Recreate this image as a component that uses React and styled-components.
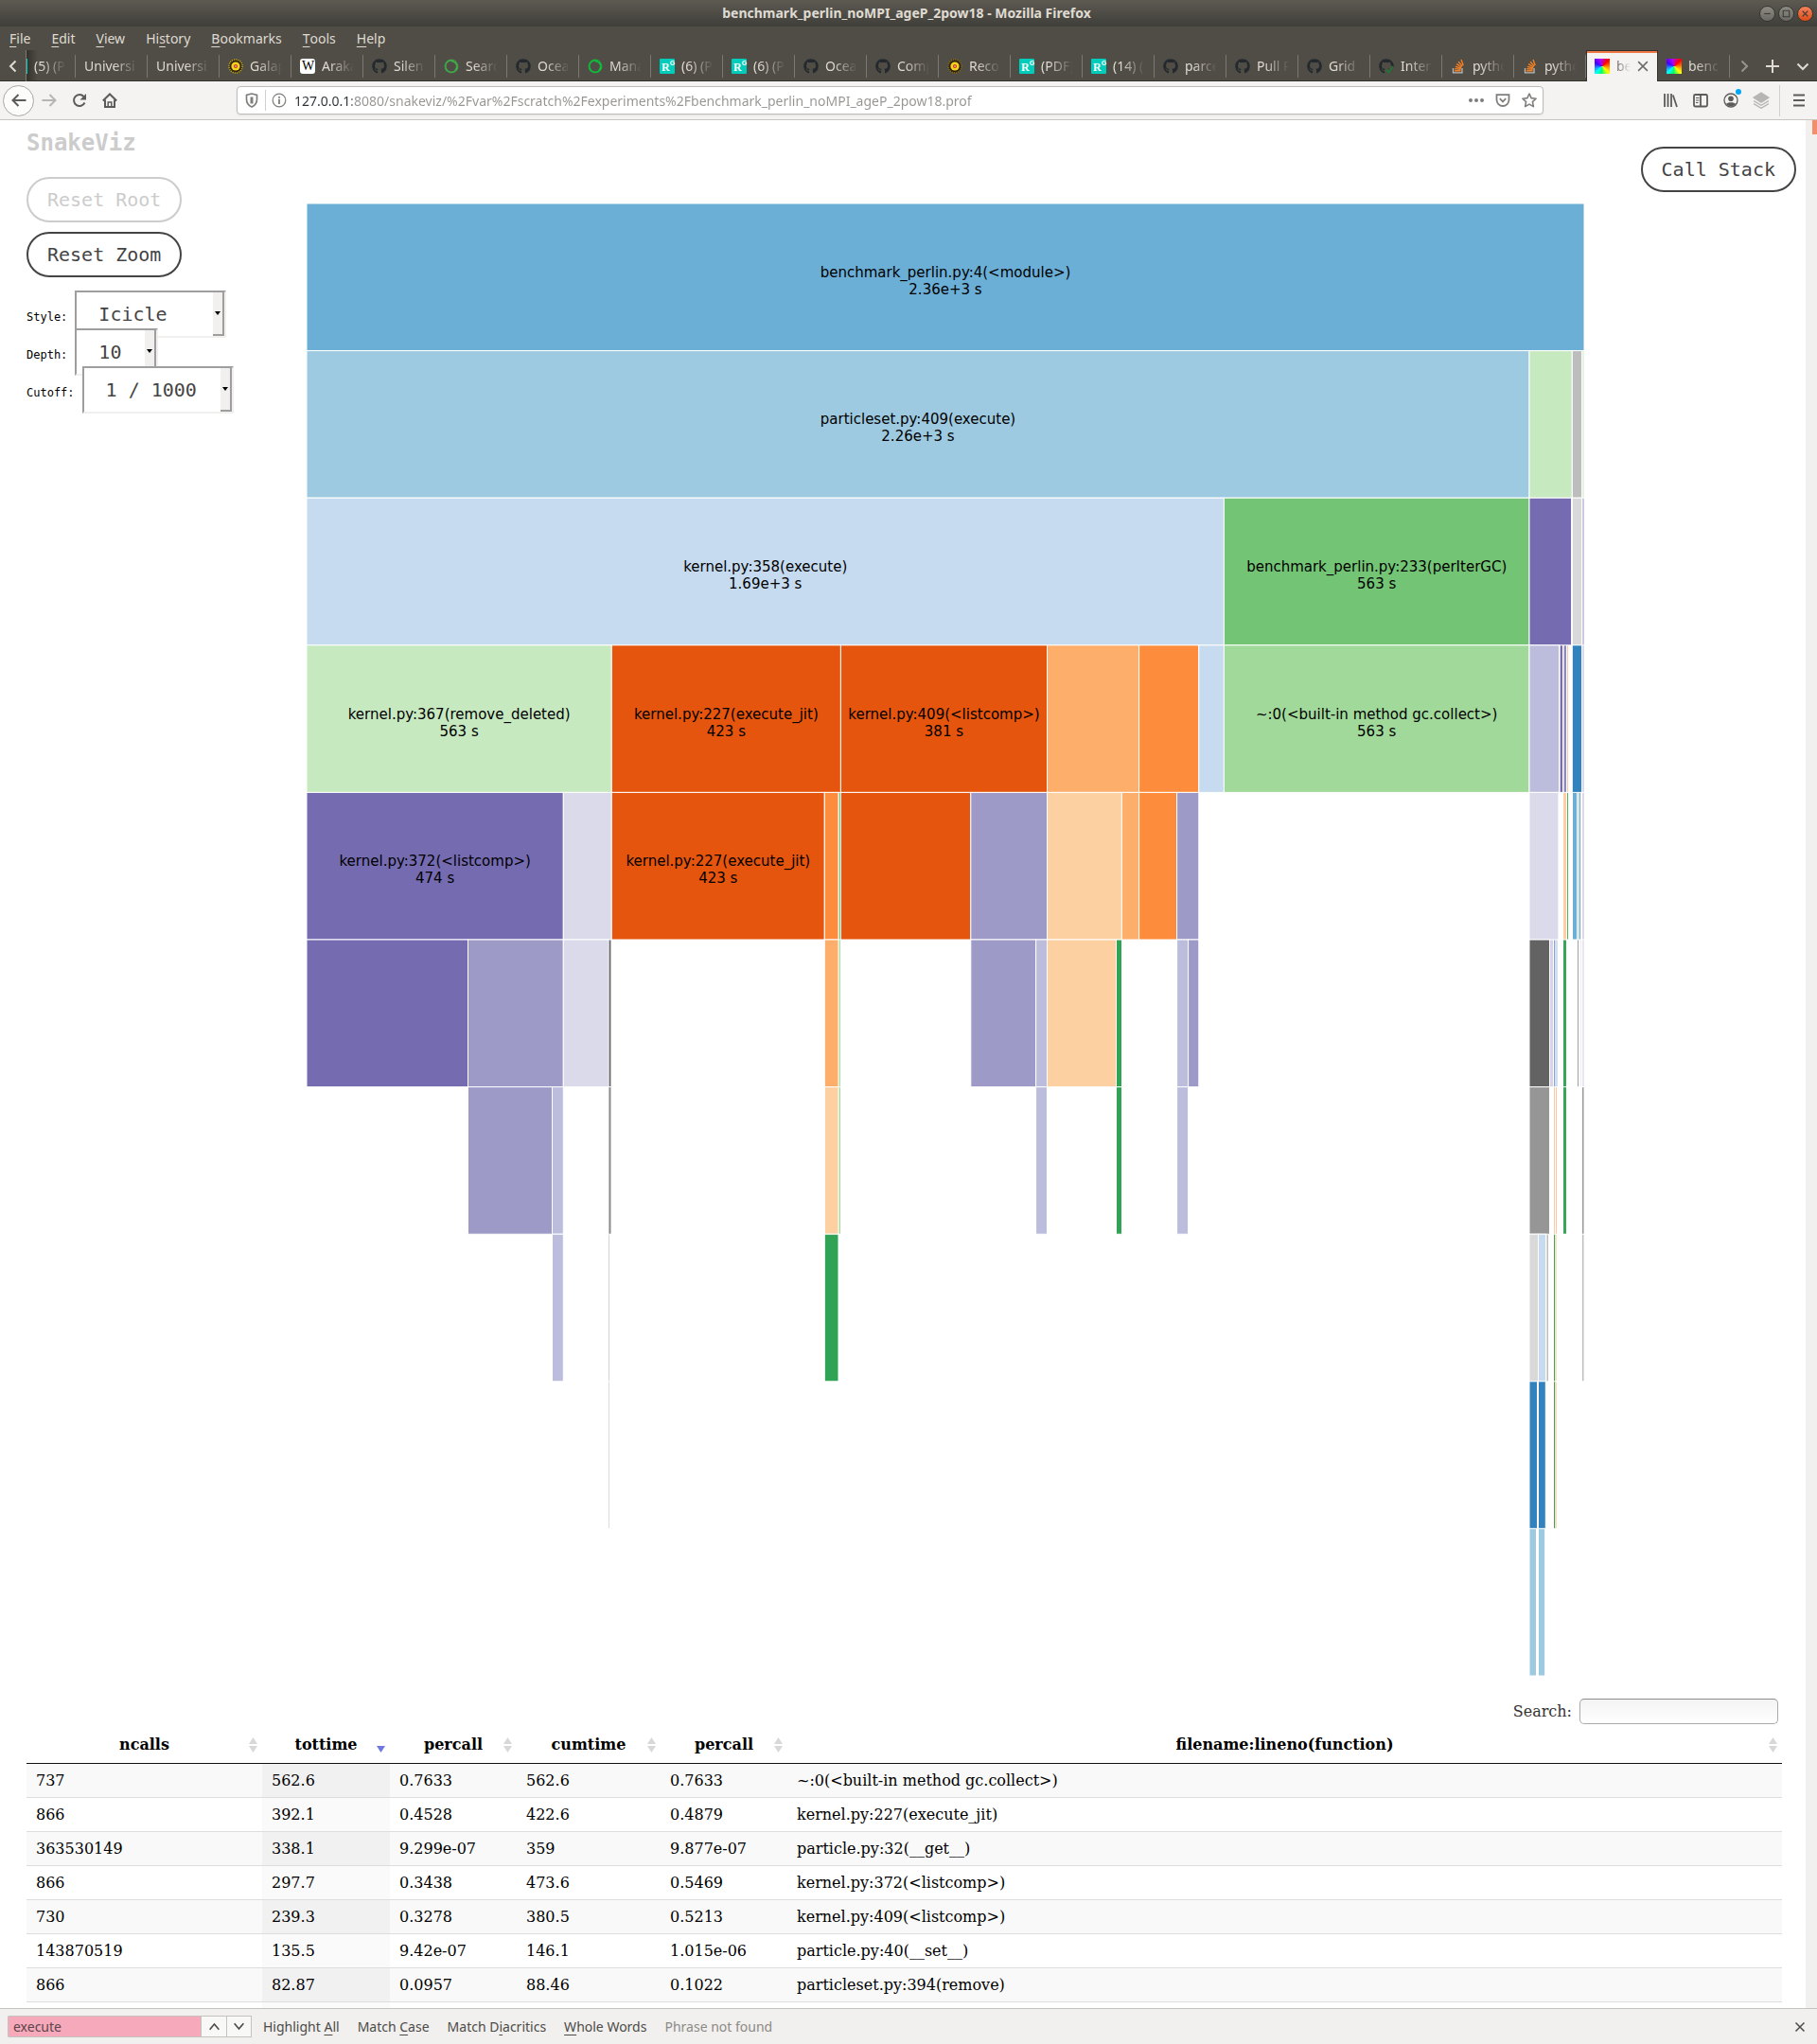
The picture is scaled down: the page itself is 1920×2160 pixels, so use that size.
import React from "react";
import styled, { createGlobalStyle, css } from "styled-components";
import { FaGithub } from "react-icons/fa";

const GlobalStyle = createGlobalStyle`
  *, *::before, *::after { box-sizing: border-box; }
  body { margin: 0; background: #fff; }
  button, input, select { font: inherit; margin: 0; }
`;

const uiFont = `"Noto Sans", "Open Sans", sans-serif`;
const monoFont = `"DejaVu Sans Mono", monospace`;
const serifFont = `"DejaVu Serif", serif`;
const chrome = "#504d46";
const panel = "#f4f3f1";

/* ---------- window frame ---------- */

const Window = styled.div`
  display: flex;
  flex-direction: column;
  height: 100vh;
  overflow: hidden;
  font-family: ${uiFont};
  font-size: 14px;
`;

const TitleBar = styled.header`
  display: grid;
  grid-template-columns: 1fr auto 1fr;
  align-items: center;
  height: 28px;
  flex: none;
  padding-right: 4px;
  background: linear-gradient(#5d5a52, #3f3e39);
`;

const WindowTitle = styled.h1`
  grid-column: 2;
  margin: 0;
  font-size: 14px;
  line-height: 20px;
  font-weight: 700;
  color: #dfdbd2;
`;

const WindowControls = styled.div`
  display: flex;
  justify-content: flex-end;
  gap: 3px;
`;

const PlainButton = styled.button`
  display: flex;
  align-items: center;
  justify-content: center;
  padding: 0;
  border: 0;
  background: none;
  color: inherit;
`;

const WindowButton = styled(PlainButton)`
  width: 17px;
  height: 17px;
  border-radius: 50%;
  border: 1px solid #35342f;
  color: #3c3b37;
  background: ${(p) => (p.$close ? "linear-gradient(#f4835d, #df4b16)" : "linear-gradient(#8d8b84, #6b6963)")};
`;

const MenuBar = styled.nav`
  display: flex;
  gap: 22px;
  flex: none;
  height: 25px;
  padding: 0 10px;
  align-items: center;
  background: ${chrome};
`;

const MenuButton = styled(PlainButton)`
  line-height: 20px;
  color: #dfdbd2;
  white-space: pre;
`;

const Key = styled.span`
  text-decoration: underline;
  text-underline-offset: 3px;
`;

/* ---------- tabs ---------- */

const TabStrip = styled.div`
  display: flex;
  flex: none;
  height: 33px;
  background: ${chrome};
  color: #dfdbd2;
  box-shadow: inset 0 -1px #33312c;
`;

const StripButton = styled(PlainButton)`
  flex: none;
  width: ${(p) => p.$w}px;
  opacity: ${(p) => (p.$dim ? 0.5 : 1)};
`;

const TabList = styled.div`
  display: flex;
  flex: 1;
  min-width: 0;
  border-left: 1px solid #7d7a73;
`;

const Tab = styled(PlainButton)`
  flex: 1 1 76px;
  min-width: 0;
  justify-content: flex-start;
  gap: 7px;
  padding: 0 10px 0 9px;
  background: linear-gradient(#7b7871, #7b7871) right center / 1px 24px no-repeat;
  ${(p) =>
    p.$partial &&
    css`
      flex: 0 0 52px;
      padding-left: 0;
      background-image: linear-gradient(#7b7871, #7b7871), linear-gradient(90deg, #34322d, rgba(80, 77, 70, 0));
      background-position: right center, left center;
      background-size: 1px 24px, 12px 33px;
    `}
  ${(p) =>
    p.$active &&
    css`
      padding: 0 9px 0 8px;
      background: ${panel};
      color: #6b6a66;
      border: solid #33312c;
      border-width: 1px 1px 0;
      box-shadow: inset 0 2px #f07746;
    `}
`;

const TabText = styled.span`
  flex: 1;
  min-width: 0;
  overflow: hidden;
  white-space: nowrap;
  text-align: left;
  line-height: 20px;
  mask-image: linear-gradient(90deg, #000 ${(p) => (p.$active ? "0" : "calc(100% - 26px)")}, transparent);
`;

const PartialIcon = styled.i`
  width: 1px;
  height: 16px;
  background: #00ccbb;
`;

const Rainbow = styled.i`
  flex: none;
  width: 16px;
  height: 16px;
  background: conic-gradient(from 45deg, #f00, #ff0 90deg, #0f6 140deg, #0ff 180deg, #40f 250deg, #a0f 300deg, #f00);
`;

const RgBadge = styled.i`
  flex: none;
  display: flex;
  width: 16px;
  height: 16px;
  padding-left: 2px;
  border-radius: 1px;
  background: #00ccbb;
  color: #fff;
  font: 700 12px/18px "Liberation Serif", serif;
`;

const RgSup = styled.b`
  font: 700 7px/9px "Liberation Sans", sans-serif;
`;

const WikiBadge = styled.i`
  flex: none;
  width: 16px;
  height: 16px;
  border-radius: 3px;
  background: #fff;
  color: #000;
  font: 14px/16px "Liberation Serif", serif;
  text-indent: 1px;
`;

const Icon = styled.svg`
  flex: none;
`;

const Svg = ({ size = 16, children, ...rest }) => (
  <Icon width={size} height={size} viewBox="0 0 16 16" fill="none" stroke="currentColor" strokeWidth="2" aria-hidden="true" {...rest}>
    {children}
  </Icon>
);

const Sun = ({ tone }) => (
  <Svg stroke="none">
    <circle cx="8" cy="8" r="7" fill="#2b2411" />
    <circle cx="8" cy="8" r="7" stroke={tone} strokeWidth="1.6" strokeDasharray="1.1 1.1" />
    <circle cx="8" cy="8" r="4.6" fill="#f5d51c" />
    <circle cx="8" cy="8" r="2" fill="#d3301c" />
    <circle cx="8" cy="8" r="0.8" fill="#e8e8ff" />
  </Svg>
);

const Ring = ({ color }) => (
  <Svg stroke={color}>
    <circle cx="8" cy="8" r="6.8" strokeWidth="1.2" strokeDasharray="1.4 .6" />
    <path d="M8 2.6a5.6 5.6 0 0 1 4 9.6" strokeWidth="1.6" />
    <circle cx="8" cy="8" r="6.2" strokeWidth="1.4" strokeDasharray="30 9" />
  </Svg>
);

const Stack = () => (
  <Svg stroke="#f48024" strokeWidth="1.4">
    <path d="M2.5 10v4.8h9.5V10" stroke="#bcbbbb" strokeWidth="1.3" />
    <path d="M4 12.8h6.5M4.200 10.600l6.400.6M4.900 8.300l6.100 1.700M6.100 5.700l5.500 3.200M8.100 3.200l4.300 4.700M11 1l2.200 5.900" />
  </Svg>
);

const HubIcon = styled(FaGithub)`
  flex: none;
  color: #24292e;
`;

const Hub = () => <HubIcon size={16} />;

const HubCheck = () => (
  <Svg viewBox="0 0 16 16">
    <FaGithub size={16} color="#24292e" stroke="none" />
    <path d="M7.5 11.5l3 3L15 8.500" stroke={chrome} strokeWidth="4" />
    <path d="M7.5 11.5l3 3L15 8.500" stroke="#1a7a33" strokeWidth="1.6" />
  </Svg>
);

const Rg = () => (
  <RgBadge>
    R<RgSup>G</RgSup>
  </RgBadge>
);

const tabs = [
  { text: "Universi" },
  { text: "Universi" },
  { text: "Galap", icon: <Sun tone="#c9a90c" /> },
  { text: "Araka", icon: <WikiBadge>W</WikiBadge> },
  { text: "Silen", icon: <Hub /> },
  { text: "Searc", icon: <Ring color="#3eae49" /> },
  { text: "Ocea", icon: <Hub /> },
  { text: "Mana", icon: <Ring color="#0cc23c" /> },
  { text: "(6) (P", icon: <Rg /> },
  { text: "(6) (P", icon: <Rg /> },
  { text: "Ocea", icon: <Hub /> },
  { text: "Comp", icon: <Hub /> },
  { text: "Reco", icon: <Sun tone="#8a6a0c" /> },
  { text: "(PDF)", icon: <Rg /> },
  { text: "(14) (", icon: <Rg /> },
  { text: "parce", icon: <Hub /> },
  { text: "Pull R", icon: <Hub /> },
  { text: "Grid i", icon: <Hub /> },
  { text: "Inter", icon: <HubCheck /> },
  { text: "pytho", icon: <Stack /> },
  { text: "pytho", icon: <Stack /> },
  { text: "be", icon: <Rainbow />, active: true },
  { text: "benc", icon: <Rainbow /> },
];

/* ---------- toolbar ---------- */

const Toolbar = styled.div`
  display: flex;
  align-items: center;
  flex: none;
  height: 41px;
  padding: 0 3px;
  background: ${panel};
  border-bottom: 1px solid #c8c4be;
  color: #5c5b58;
`;

const ToolButton = styled(PlainButton)`
  position: relative;
  flex: none;
  width: ${(p) => (p.$back ? 33 : 32)}px;
  height: 33px;
  opacity: ${(p) => (p.$dim ? 0.4 : 1)};
  ${(p) =>
    p.$back &&
    css`
      border: 1px solid #a9a7a3;
      border-radius: 50%;
      background: #fcfcfb;
    `}
`;

const AddressBar = styled.div`
  display: flex;
  align-items: center;
  flex: 1;
  min-width: 0;
  height: 30px;
  margin: 0 118px;
  padding: 0 0 0 1px;
  border: 1px solid #bfbcb7;
  border-radius: 4px;
  background: #fff;
  color: #7f7e7c;
  box-shadow: 0 1px 2px rgba(0, 0, 0, 0.08);
`;

const FieldButton = styled(PlainButton)`
  flex: none;
  width: 28px;
  height: 28px;
`;

const FieldDivider = styled.i`
  flex: none;
  width: 1px;
  height: 22px;
  background: #d3d0cc;
`;

const ToolDivider = styled(FieldDivider)`
  height: 33px;
  margin: 0 4px 0 3px;
`;

const UrlInput = styled.input`
  flex: 1;
  min-width: 0;
  height: 28px;
  padding: 0 0 0 2px;
  border: 0;
  outline: 0;
  font-size: 14px;
  color: transparent;
  background: linear-gradient(90deg, #2e3436 63px, #969593 63px);
  background-clip: text;
  -webkit-background-clip: text;
`;

const Notice = styled.i`
  position: absolute;
  top: 4px;
  right: 5px;
  width: 6px;
  height: 6px;
  border-radius: 50%;
  background: #00a7f7;
`;

/* ---------- page ---------- */

const Viewport = styled.div`
  display: flex;
  flex: 1;
  min-height: 0;
`;

const Page = styled.main`
  flex: 1;
  min-width: 0;
  overflow: hidden;
  background: #fff;
`;

const ScrollTrack = styled.div`
  display: flex;
  justify-content: flex-end;
  flex: none;
  width: 12px;
  background: #f1f0ee;
`;

const ScrollThumb = styled.div`
  width: 5px;
  height: 15px;
  background: #f28f6a;
`;

const Workspace = styled.section`
  display: grid;
  grid-template-columns: 296px minmax(0, 1fr) 224px;
  align-items: start;
  padding: 0 10px 0 28px;
`;

const Sidebar = styled.aside`
  display: flex;
  flex-direction: column;
  align-items: flex-start;
  padding-top: 10px;
  font-family: ${monoFont};
`;

const Brand = styled.h2`
  margin: 0 0 22px;
  font-size: 24px;
  line-height: 28px;
  font-weight: 700;
  color: #ccc;
`;

const PillButton = styled.button`
  height: 48px;
  padding: 0 20px;
  margin-bottom: ${(p) => p.$gap || 0}px;
  border: 2px solid #444;
  border-radius: 24px;
  background: #fff;
  font-family: ${monoFont};
  font-size: 20px;
  white-space: nowrap;
  color: #444;
  &:disabled {
    border-color: #ccc;
    color: #ccc;
  }
`;

const OptionRow = styled.div`
  display: flex;
  align-items: baseline;
  gap: 8px;
  height: 40px;
`;

const OptionLabel = styled.label`
  font-size: 12px;
  color: #000;
`;

const SelectBox = styled.span`
  display: flex;
  align-items: center;
  width: ${(p) => p.$w}px;
  height: 50px;
  border: 2px solid;
  border-color: #9e9e9e #f1f0ee #f1f0ee #9e9e9e;
  background: #fff;
`;

const Select = styled.select`
  appearance: none;
  flex: 1;
  min-width: 0;
  height: 46px;
  padding: 0 0 0 23px;
  border: 0;
  background: none;
  font-size: 20px;
  color: #444;
`;

const SelectArrow = styled.span`
  display: flex;
  align-items: center;
  justify-content: center;
  width: 12px;
  height: 46px;
  background: #f1f0ee;
  border: solid #9e9e9e;
  border-width: 0 2px 2px 0;
  &::after {
    content: "";
    border: 3px solid transparent;
    border-top: 4px solid #000;
    border-bottom: 0;
  }
`;

const StackCell = styled.div`
  display: flex;
  justify-content: flex-end;
  padding-top: 28px;
`;

const Chart = styled.svg`
  display: block;
  width: 100%;
  height: auto;
  margin-top: 88px;
  font-family: "DejaVu Sans", sans-serif;
  font-size: 15px;
`;

const ROW = 155.6;

/* depth, start, end, fill, function, time */
const nodes = [
  [0, 0, 1350, "#6baed6", "benchmark_perlin.py:4(<module>)", "2.36e+3 s"],
  [1, 0, 1292, "#9ecae1", "particleset.py:409(execute)", "2.26e+3 s"],
  [1, 1292, 1337.3, "#c7e9c0"],
  [1, 1337.3, 1347.6, "#bdbdbd"],
  [2, 0, 969.4, "#c6dbef", "kernel.py:358(execute)", "1.69e+3 s"],
  [2, 969.4, 1292, "#74c476", "benchmark_perlin.py:233(perIterGC)", "563 s"],
  [2, 1292, 1336.6, "#756bb1"],
  [2, 1337.3, 1347.6, "#d9d9d9"],
  [3, 0, 322.3, "#c7e9c0", "kernel.py:367(remove_deleted)", "563 s"],
  [3, 322.3, 564.4, "#e6550d", "kernel.py:227(execute_jit)", "423 s"],
  [3, 564.4, 782.5, "#e6550d", "kernel.py:409(<listcomp>)", "381 s"],
  [3, 782.5, 879.6, "#fdae6b"],
  [3, 879.6, 942.8, "#fd8d3c"],
  [3, 942.8, 969.4, "#c6dbef"],
  [3, 969.4, 1292, "#a1d99b", "~:0(<built-in method gc.collect>)", "563 s"],
  [3, 1292, 1323.5, "#bcbddc"],
  [3, 1337.3, 1347.6, "#3182bd"],
  [4, 0, 271.3, "#756bb1", "kernel.py:372(<listcomp>)", "474 s"],
  [4, 271.3, 322.3, "#dadaeb"],
  [4, 322.3, 547.3, "#e6550d", "kernel.py:227(execute_jit)", "423 s"],
  [4, 547.3, 562, "#fd8d3c"],
  [4, 564.4, 701.8, "#e6550d"],
  [4, 701.8, 782.5, "#9e9ac8"],
  [4, 782.5, 861.4, "#fdd0a2"],
  [4, 861.4, 879.6, "#fdae6b"],
  [4, 879.6, 919.6, "#fd8d3c"],
  [4, 919.6, 942.8, "#9e9ac8"],
  [4, 1292, 1322.9, "#dadaeb"],
  [5, 0, 170.5, "#756bb1"],
  [5, 170.5, 271.3, "#9e9ac8"],
  [5, 271.3, 319.3, "#dadaeb"],
  [5, 547.3, 562, "#fdae6b"],
  [5, 701.8, 770.6, "#9e9ac8"],
  [5, 770.6, 782.5, "#bcbddc"],
  [5, 782.5, 855.5, "#fdd0a2"],
  [5, 855.5, 861.5, "#31a354"],
  [5, 919.6, 931.6, "#bcbddc"],
  [5, 931.6, 942.8, "#9e9ac8"],
  [5, 1292, 1313.5, "#636363"],
  [6, 170.5, 259.5, "#9e9ac8"],
  [6, 259.5, 271.3, "#bcbddc"],
  [6, 547.3, 562, "#fdd0a2"],
  [6, 770.6, 782.5, "#bcbddc"],
  [6, 855.5, 861.5, "#31a354"],
  [6, 919.6, 931.6, "#bcbddc"],
  [6, 1292, 1313.5, "#969696"],
  [7, 259.5, 271.3, "#bcbddc"],
  [7, 547.3, 562, "#31a354"],
  [7, 1292, 1301.5, "#d9d9d9"],
  [7, 1301.5, 1309.5, "#c6dbef"],
  [8, 1292, 1300.5, "#3182bd"],
  [8, 1301.5, 1309.3, "#3182bd"],
  [9, 1292, 1299.5, "#9ecae1"],
  [9, 1301.5, 1308.7, "#9ecae1"],
];

/* calls too short for an outline: depth, start, width, fill */
const slivers = [
  [1, 1348, 2, "#e6f4e2"],
  [2, 1348, 2, "#cdc8e3"],
  [3, 1324, 1, "#d0cde6"], [3, 1325, 2, "#756bb1"], [3, 1328, 1, "#cfcce4"], [3, 1329, 2, "#9089c1"], [3, 1332, 1, "#fdc9a0"], [3, 1348, 2, "#dadaeb"],
  [4, 562, 1, "#dff1e3"], [4, 563, 1, "#6fbf7c"], [4, 1328, 3, "#fdd0a2"], [4, 1332, 1, "#4fb16d"], [4, 1338, 4, "#6baed6"], [4, 1343, 1, "#b5d3e9"], [4, 1345, 1, "#5a9bcb"], [4, 1348, 2, "#dadaeb"],
  [5, 319, 1, "#c4c4c4"], [5, 320, 1, "#666"], [5, 321, 1, "#bbb"], [5, 562, 1, "#e3f3de"], [5, 563, 1, "#a9dba2"],
  [5, 1314, 3, "#d5d3e8"], [5, 1318, 1, "#a09ac9"], [5, 1319, 3, "#cde1f0"], [5, 1328, 3, "#38a65a"], [5, 1343, 1, "#a0a0a0"], [5, 1346, 1, "#efedf0"], [5, 1348, 2, "#e8e6f3"],
  [6, 319, 1, "#bbb"], [6, 320, 1, "#8c8c8c"], [6, 321, 1, "#c4c4c4"], [6, 562, 1, "#e3f3de"], [6, 563, 1, "#a1d99b"],
  [6, 1318, 1, "#fdcb98"], [6, 1320, 1, "#fbc5ad"], [6, 1328, 3, "#38a65a"], [6, 1348, 1, "#999"], [6, 1349, 1, "#ccc"],
  [7, 319, 1, "#d4d4d4"], [7, 1310, 1, "#ddd"], [7, 1311, 1, "#bdbdbd"], [7, 1318, 1, "#38a65a"], [7, 1319, 2, "#fddfc2"], [7, 1348, 1, "#bdbdbd"], [7, 1349, 1, "#e2e2e2"],
  [8, 319, 1, "#dcdcdc"], [8, 1318, 1, "#38a65a"], [8, 1319, 2, "#fbdcc2"],
];

const Icicle = () => (
  <Chart viewBox="0 0 1350 1556" role="img" aria-label="Icicle chart of calls">
    {nodes.map(([depth, start, end, fill], i) => (
      <rect key={i} x={start} y={depth * ROW} width={end - start} height={ROW} fill={fill} stroke="#fff" />
    ))}
    {slivers.map(([depth, start, width, fill], i) => (
      <rect key={i} x={start} y={depth * ROW + 0.5} width={width} height={ROW - 1} fill={fill} />
    ))}
    {nodes
      .filter((n) => n[4])
      .map(([depth, start, end, , name, time], i) => (
        <g key={i} textAnchor="middle">
          <text x={(start + end) / 2} y={Math.round((depth + 0.5) * ROW)}>{name}</text>
          <text x={(start + end) / 2} y={Math.round((depth + 0.5) * ROW) + 18}>{time}</text>
        </g>
      ))}
  </Chart>
);

const Results = styled.section`
  padding: 24px 25px 0 28px;
  font-family: ${serifFont};
  font-size: 16px;
  line-height: 19px;
`;

const SearchRow = styled.div`
  display: flex;
  align-items: center;
  justify-content: flex-end;
  gap: 8px;
  padding: 0 4px 2px 0;
  color: #333;
`;

const SearchInput = styled.input`
  width: 210px;
  height: 27px;
  padding: 0 6px;
  border: 1px solid #aaa;
  border-top-color: #8c8c8c;
  border-radius: 5px;
  background: linear-gradient(#f3f3f3, #fff);
`;

const Table = styled.table`
  width: 100%;
  table-layout: fixed;
  border-collapse: separate;
  border-spacing: 0;
`;

const Col = styled.col`
  width: ${(p) => (p.$w ? `${p.$w}px` : "auto")};
`;

const Th = styled.th`
  padding: 10px 5px 10px 18px;
  border-bottom: 1px solid #111;
  text-align: center;
`;

const HeadCell = styled.div`
  display: flex;
  align-items: center;
  gap: 4px;
`;

const HeadText = styled.span`
  flex: 1;
`;

const Td = styled.td`
  padding: 8px 10px;
  border-bottom: 1px solid #ddd;
  color: #000;
  background: ${(p) => (p.$sorted ? "#fafafa" : "#fff")};
  tr:nth-child(odd) > & {
    background: ${(p) => (p.$sorted ? "#f1f1f1" : "#f9f9f9")};
  }
`;

const SortIcon = ({ sorted }) => (
  <Icon width="9" height="16" viewBox="0 0 9 16" aria-hidden="true">
    {!sorted && <path d="M0 7 4.500 0 9 7Z" fill="#d8d8d8" />}
    <path d="M0 9 4.500 16 9 9Z" fill={sorted ? "#7178dd" : "#d8d8d8"} />
  </Icon>
);

const columns = [
  ["ncalls", 249],
  ["tottime", 135],
  ["percall", 134],
  ["cumtime", 152],
  ["percall", 134],
  ["filename:lineno(function)", 0],
];

const rows = [
  ["737", "562.6", "0.7633", "562.6", "0.7633", "~:0(<built-in method gc.collect>)"],
  ["866", "392.1", "0.4528", "422.6", "0.4879", "kernel.py:227(execute_jit)"],
  ["363530149", "338.1", "9.299e-07", "359", "9.877e-07", "particle.py:32(__get__)"],
  ["866", "297.7", "0.3438", "473.6", "0.5469", "kernel.py:372(<listcomp>)"],
  ["730", "239.3", "0.3278", "380.5", "0.5213", "kernel.py:409(<listcomp>)"],
  ["143870519", "135.5", "9.42e-07", "146.1", "1.015e-06", "particle.py:40(__set__)"],
  ["866", "82.87", "0.0957", "88.46", "0.1022", "particleset.py:394(remove)"],
  ["", "", "", "", "", ""],
];

/* ---------- find bar ---------- */

const FindBar = styled.footer`
  display: flex;
  align-items: center;
  flex: none;
  height: 38px;
  padding: 0 12px 0 8px;
  border-top: 1px solid #c5c3be;
  background: #f1f0ee;
  color: #4c4b48;
`;

const FindInput = styled.input`
  width: 204px;
  height: 23px;
  padding: 0 5px;
  border: 1px solid #c5c3be;
  border-right: 0;
  border-radius: 2px 0 0 2px;
  outline: 0;
  background: #f6a9ba;
  color: #5c454b;
`;

const FindStep = styled(PlainButton)`
  width: 27px;
  height: 23px;
  border: 1px solid #c5c3be;
  border-right-width: ${(p) => (p.$last ? 1 : 0)}px;
  background: #f8f8f7;
`;

const FindOptions = styled.div`
  display: flex;
  flex: 1;
  gap: 19px;
  padding-left: 12px;
  line-height: 20px;
`;

const FindToggle = styled(PlainButton)`
  white-space: pre;
`;

const FindStatus = styled.span`
  color: #8c8a86;
`;

const Accel = ({ text }) => {
  const [before, key, after] = text.split("|");
  return (
    <>
      {before}
      <Key>{key}</Key>
      {after}
    </>
  );
};

const menus = ["|F|ile", "|E|dit", "|V|iew", "Hi|s|tory", "|B|ookmarks", "|T|ools", "|H|elp"];
const findToggles = ["Highlight |A|ll", "Match |C|ase", "Match D|i|acritics", "|W|hole Words"];

const Option = ({ id, label, value, width }) => (
  <OptionRow>
    <OptionLabel htmlFor={id}>{label}</OptionLabel>
    <SelectBox $w={width}>
      <Select id={id} defaultValue={value}>
        <option>{value}</option>
      </Select>
      <SelectArrow />
    </SelectBox>
  </OptionRow>
);

export default function App() {
  return (
    <Window>
      <GlobalStyle />
      <TitleBar>
        <WindowTitle>benchmark_perlin_noMPI_ageP_2pow18 - Mozilla Firefox</WindowTitle>
        <WindowControls>
          <WindowButton aria-label="Minimize">
            <Svg size={13} strokeWidth="1.4"><path d="M4 8h8" /></Svg>
          </WindowButton>
          <WindowButton aria-label="Maximize">
            <Svg size={13} strokeWidth="1.4"><path d="M4 4h8v8H4z" /></Svg>
          </WindowButton>
          <WindowButton $close aria-label="Close window">
            <Svg size={13} strokeWidth="1.6"><path d="m4.500 4.500 7 7m0-7-7 7" /></Svg>
          </WindowButton>
        </WindowControls>
      </TitleBar>

      <MenuBar>
        {menus.map((m) => (
          <MenuButton key={m}><Accel text={m} /></MenuButton>
        ))}
      </MenuBar>

      <TabStrip>
        <StripButton $w={27} aria-label="Scroll tabs left">
          <Svg><path d="M10.500 2.500 5 8l5.500 5.500" /></Svg>
        </StripButton>
        <TabList>
          <Tab $partial>
            <PartialIcon />
            <TabText>(5) (P</TabText>
          </Tab>
          {tabs.map((t, i) => (
            <Tab key={i} $active={t.active}>
              {t.icon}
              <TabText $active={t.active}>{t.text}</TabText>
              {t.active && <Svg size={12}><path d="m1.500 1.500 13 13m0-13-13 13" /></Svg>}
            </Tab>
          ))}
        </TabList>
        <StripButton $w={29} $dim aria-label="Scroll tabs right">
          <Svg><path d="M5.500 2.500 11 8l-5.500 5.500" /></Svg>
        </StripButton>
        <StripButton $w={32} aria-label="New tab">
          <Svg><path d="M8 1v14M1 8h14" /></Svg>
        </StripButton>
        <StripButton $w={31} aria-label="List all tabs">
          <Svg><path d="M2.500 5.500 8 11l5.500-5.500" /></Svg>
        </StripButton>
      </TabStrip>

      <Toolbar>
        <ToolButton $back aria-label="Back">
          <Svg><path d="M15.500 8H1.500M7.500 2 1.500 8l6 6" /></Svg>
        </ToolButton>
        <ToolButton $dim aria-label="Forward">
          <Svg><path d="M.5 8h14M8.500 2l6 6-6 6" /></Svg>
        </ToolButton>
        <ToolButton aria-label="Reload">
          <Svg><path d="M13.500 10.500A6 6 0 1 1 12.500 4" /><path d="M15 1v6.500H8.500Z" fill="currentColor" stroke="none" /></Svg>
        </ToolButton>
        <ToolButton aria-label="Home">
          <Svg><path d="M.8 8.500 8 1.500l7.200 7M3 7.500V15h10V7.500" /><path d="M6.200 15v-5h3.600v5" strokeWidth="1.5" /></Svg>
        </ToolButton>
        <AddressBar>
          <FieldButton aria-label="Tracking protection">
            <Svg strokeWidth="1.7"><path d="M8 1 2.500 2.300V7c0 4 2 6.500 5.500 8 3.500-1.500 5.500-4 5.500-8V2.300Z" /><path d="M8 4.500v7" strokeWidth="3" /></Svg>
          </FieldButton>
          <FieldDivider />
          <FieldButton aria-label="Site information">
            <Svg strokeWidth="1.2"><circle cx="8" cy="8" r="6.8" /><path d="M8 6.800V12M8 4v1.800" strokeWidth="1.8" /></Svg>
          </FieldButton>
          <UrlInput
            aria-label="Address"
            defaultValue="127.0.0.1:8080/snakeviz/%2Fvar%2Fscratch%2Fexperiments%2Fbenchmark_perlin_noMPI_ageP_2pow18.prof"
          />
          <FieldButton aria-label="Page actions">
            <Svg stroke="none" fill="currentColor"><circle cx="2" cy="8" r="2" /><circle cx="8" cy="8" r="2" /><circle cx="14" cy="8" r="2" /></Svg>
          </FieldButton>
          <FieldButton aria-label="Save to Pocket">
            <Svg strokeWidth="1.8"><path d="M1.500 2.200h13v5.300a6.500 6.500 0 0 1-13 0Z" /><path d="M4.800 6.200 8 9.400l3.200-3.200" /></Svg>
          </FieldButton>
          <FieldButton aria-label="Bookmark this page">
            <Svg strokeWidth="1.6" strokeLinejoin="round"><path d="m8 1 2.100 4.600 5 .6-3.700 3.400 1 5L8 12.100l-4.400 2.500 1-5L.9 6.200l5-.6Z" /></Svg>
          </FieldButton>
        </AddressBar>
        <ToolButton aria-label="Library">
          <Svg strokeWidth="1.8"><path d="M2 1v14M5.500 1v14M9 1v14M10.800 2.500 15 15" /></Svg>
        </ToolButton>
        <ToolButton aria-label="Sidebars">
          <Svg strokeWidth="1.8"><rect x="1" y="2" width="14" height="12.5" rx="1.5" /><path d="M8 2v12.500" /><path d="M3 5.500h3.500M3 8h3.500M3 10.500h2.500" strokeWidth="1.2" /></Svg>
        </ToolButton>
        <ToolButton aria-label="Account">
          <Svg strokeWidth="1.3"><circle cx="8" cy="8" r="7" /><circle cx="8" cy="6.2" r="2.8" fill="currentColor" stroke="none" /><path d="M3 12c1-2.500 9-2.500 10 0-2 3-8 3-10 0Z" fill="currentColor" stroke="none" /></Svg>
          <Notice />
        </ToolButton>
        <ToolButton $dim aria-label="Containers">
          <Svg strokeWidth="1.2" size={18}><path d="m1 5.500 7-4.500 7 4.500L8 10Z" fill="currentColor" /><path d="m1 8.500 7 4.200 7-4.200M1 11.200l7 4.200 7-4.200" /></Svg>
        </ToolButton>
        <ToolDivider />
        <ToolButton aria-label="Open menu">
          <Svg><path d="M2 2.500h12M2 8h12M2 13.500h12" /></Svg>
        </ToolButton>
      </Toolbar>

      <Viewport>
        <Page>
          <Workspace>
            <Sidebar>
              <Brand>SnakeViz</Brand>
              <PillButton disabled $gap={10}>Reset Root</PillButton>
              <PillButton $gap={14}>Reset Zoom</PillButton>
              <Option id="style" label="Style:" value="Icicle" width={160} />
              <Option id="depth" label="Depth:" value="10" width={88} />
              <Option id="cutoff" label="Cutoff:" value={"1 \u2215 1000"} width={160} />
            </Sidebar>
            <Icicle />
            <StackCell>
              <PillButton>Call Stack</PillButton>
            </StackCell>
          </Workspace>

          <Results>
            <SearchRow>
              <label htmlFor="search">Search:</label>
              <SearchInput id="search" type="text" />
            </SearchRow>
            <Table>
              <colgroup>
                {columns.map(([, w], i) => <Col key={i} $w={w} />)}
              </colgroup>
              <thead>
                <tr>
                  {columns.map(([name], i) => (
                    <Th key={i} scope="col">
                      <HeadCell>
                        <HeadText>{name}</HeadText>
                        <SortIcon sorted={i === 1} />
                      </HeadCell>
                    </Th>
                  ))}
                </tr>
              </thead>
              <tbody>
                {rows.map((r, i) => (
                  <tr key={i}>
                    {r.map((c, j) => <Td key={j} $sorted={j === 1}>{c}</Td>)}
                  </tr>
                ))}
              </tbody>
            </Table>
          </Results>
        </Page>
        <ScrollTrack>
          <ScrollThumb />
        </ScrollTrack>
      </Viewport>

      <FindBar>
        <FindInput aria-label="Find in page" defaultValue="execute" />
        <FindStep aria-label="Previous match"><Svg size={13}><path d="M2 12 8 5l6 7" /></Svg></FindStep>
        <FindStep $last aria-label="Next match"><Svg size={13}><path d="m2 4 6 7 6-7" /></Svg></FindStep>
        <FindOptions>
          {findToggles.map((t) => (
            <FindToggle key={t}><Accel text={t} /></FindToggle>
          ))}
          <FindStatus>Phrase not found</FindStatus>
        </FindOptions>
        <PlainButton aria-label="Close find bar"><Svg size={12}><path d="m2 2 12 12M14 2 2 14" /></Svg></PlainButton>
      </FindBar>
    </Window>
  );
}
